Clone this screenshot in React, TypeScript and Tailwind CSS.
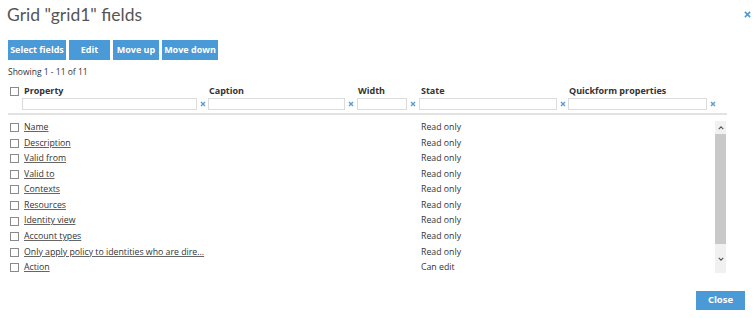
import React from 'react';

const rows: [string, string][] = [
  ['Name', 'Read only'],
  ['Description', 'Read only'],
  ['Valid from', 'Read only'],
  ['Valid to', 'Read only'],
  ['Contexts', 'Read only'],
  ['Resources', 'Read only'],
  ['Identity view', 'Read only'],
  ['Account types', 'Read only'],
  ['Only apply policy to identities who are dire...', 'Read only'],
  ['Action', 'Can edit'],
];

const Box: React.FC = () => (
  <span className="inline-block w-[9px] h-[9px] border border-[#8a8a8a] bg-white shrink-0" />
);

const Clear: React.FC = () => (
  <svg viewBox="0 0 6 6" className="w-[6px] h-[6px] shrink-0" fill="none" stroke="#5b9bd5" strokeWidth="1.4">
    <path d="M1 1L5 5M5 1L1 5" />
  </svg>
);

const Filter: React.FC<{ w: string }> = ({ w }) => (
  <div className="flex items-center gap-[3px]">
    <div className={`${w} h-[12px] border border-[#dcdcdc] bg-white`} />
    <Clear />
  </div>
);

const Btn: React.FC<{ label: string; w: string }> = ({ label, w }) => (
  <button className={`${w} h-[20px] bg-[#4a9ad8] text-white text-[9px] font-bold flex items-center justify-center`}>
    {label}
  </button>
);

export default function App() {
  return (
    <div className="w-[755px] h-[318px] bg-white relative text-[#333] overflow-hidden" style={{ fontFamily: '"Open Sans", sans-serif' }}>
      <div className="absolute right-[4px] top-[11px]">
        <svg viewBox="0 0 8 8" className="w-[7px] h-[7px]" fill="none" stroke="#4a9ad8" strokeWidth="1.8">
          <path d="M1 1L7 7M7 1L1 7" />
        </svg>
      </div>

      <h1 className="pl-[7px] pt-[4px] h-[40px] text-[17.5px] text-[#555] font-normal leading-[22px]" style={{ fontFamily: 'Lato, sans-serif' }}>
        Grid "grid1" fields
      </h1>

      <div className="flex gap-[3px] pl-[8px]">
        <Btn label="Select fields" w="w-[58px]" />
        <Btn label="Edit" w="w-[41px]" />
        <Btn label="Move up" w="w-[46px]" />
        <Btn label="Move down" w="w-[56px]" />
      </div>

      <div className="pl-[8px] pt-[6px] text-[8.5px] leading-[12px] text-[#333]">Showing 1 - 11 of 11</div>

      <div className="ml-[8px] w-[719px] mt-[7px]">
        <div className="grid grid-cols-[200px_149px_62px_149px_1fr] text-[9px] font-bold leading-[12px] h-[12px]">
          <div className="flex items-center gap-[5px] pl-[2px]">
            <Box />
            <span>Property</span>
          </div>
          <div className="pl-[1px]">Caption</div>
          <div className="pl-[1px]">Width</div>
          <div className="pl-[2px]">State</div>
          <div className="pl-[1px]">Quickform properties</div>
        </div>
        <div className="grid grid-cols-[200px_149px_62px_149px_1fr] mt-[1px] h-[14px]">
          <div className="pl-[14px]"><Filter w="w-[175px]" /></div>
          <div><Filter w="w-[137px]" /></div>
          <div><Filter w="w-[50px]" /></div>
          <div><Filter w="w-[138px]" /></div>
          <div><Filter w="w-[139px]" /></div>
        </div>
        <div className="h-[2px] bg-[#e2e2e2] mt-[1px]" />

        <div className="flex mt-[5px]">
          <div className="flex-1">
            {rows.map(([name, state]) => (
              <div key={name} className="grid grid-cols-[411px_1fr] h-[15.55px] items-center text-[8.75px]">
                <div className="flex items-center gap-[5px] pl-[2px]">
                  <Box />
                  <span className="underline underline-offset-[1px] decoration-[#666]">{name}</span>
                </div>
                <div className="pl-[2px]">{state}</div>
              </div>
            ))}
          </div>
          <div className="w-[11px] h-[152px] bg-[#f1f1f1] flex flex-col items-center mr-[1px] mt-[1px]">
            <div className="h-[13px] flex items-center justify-center">
              <svg viewBox="0 0 8 5" className="w-[6px] h-[4px]" fill="none" stroke="#555" strokeWidth="1.5">
                <path d="M1 4L4 1L7 4" />
              </svg>
            </div>
            <div className="w-full h-[110px] bg-[#c9c9c9]" />
            <div className="flex-1 flex items-center justify-center">
              <svg viewBox="0 0 8 5" className="w-[6px] h-[4px]" fill="none" stroke="#555" strokeWidth="1.5">
                <path d="M1 1L4 4L7 1" />
              </svg>
            </div>
          </div>
        </div>
      </div>

      <div className="absolute right-[10px] bottom-[8px]">
        <button className="w-[49px] h-[19px] bg-[#4a9ad8] text-white text-[9.5px] font-bold">Close</button>
      </div>
    </div>
  );
}
